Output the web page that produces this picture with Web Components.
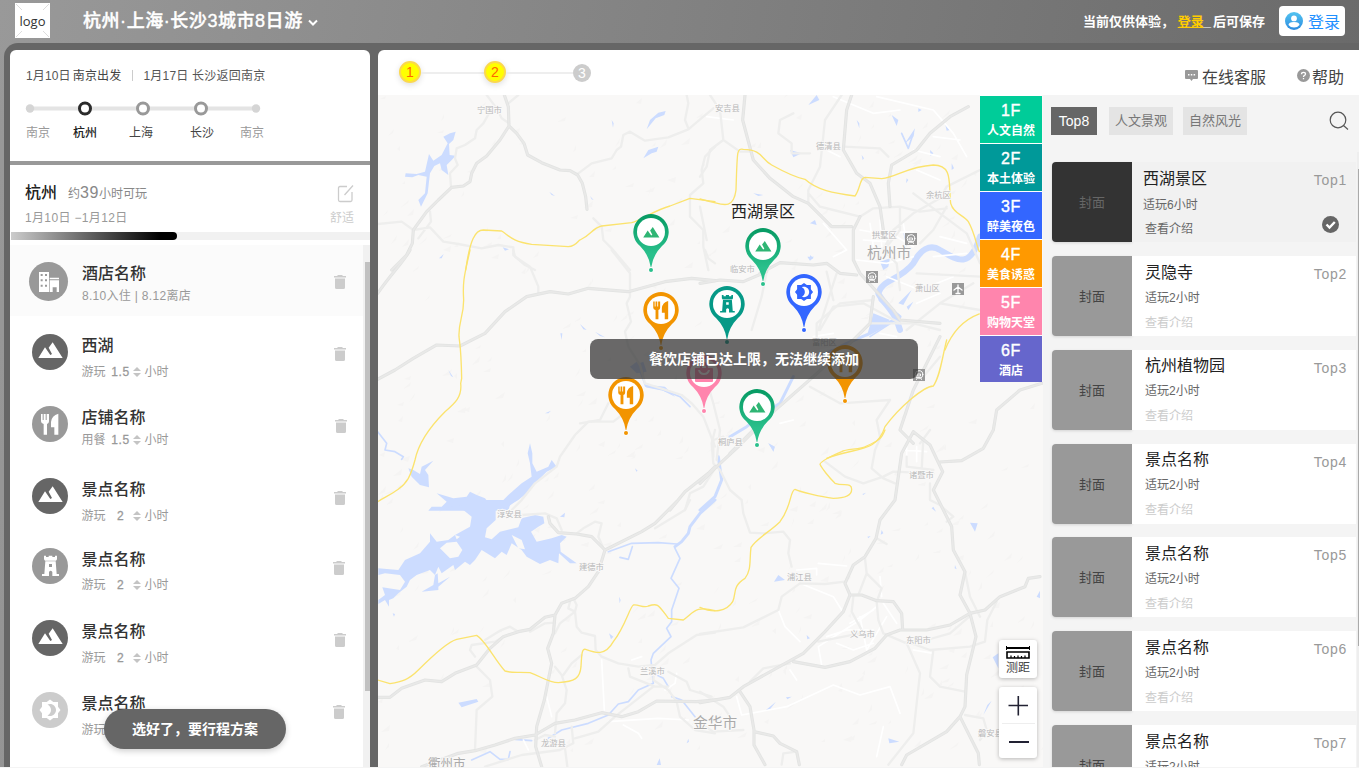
<!DOCTYPE html>
<html lang="zh-CN">
<head>
<meta charset="utf-8">
<title>行程规划</title>
<style>
html,body{margin:0;height:100%;overflow:hidden}
body{font-family:"Liberation Sans","Noto Sans CJK SC",sans-serif;color:#333;font-size:12px}
</style>
</head>
<body>
<trip-app></trip-app>
<script>
const glyphs = {
  mountain: ['96 282 108 108','<path d="M115 354L135 322L151 345L156 342L146 323L158 307L188 354Z"/>'],
  food: ['96 498 108 108','<path d="M123 522h5v18h3v-18h6v18h3v-18h5l2 0v22q0 6-6 8v32h-10v-32q-8-2-8-8zM175 521v63h-12v-22h-10v-16q2-20 22-25z"/>'],
  tower: ['96 144 108 108','<path fill-rule="evenodd" d="M132 167h6v4h8v-4h11v4h8v-4h6v11l-3 4h-33l-3-4zM136 184h31l3 38h7v6h-20v-12q-5-7-10 0v12h-21v-6h7zM147 192v9h9v-9z"/>'],
  hotel: ['87 66 117 117','<path fill-rule="evenodd" d="M117 96h30v60h-30zM122 102v6h6v-6zM135 102v6h6v-6zM122 118v6h6v-6zM135 118v6h6v-6zM122 134v6h6v-6zM135 134v6h6v-6zM149 113h28v5h-28zM149 121h28v35h-7v-14h-12v14h-9z"/>'],
  night: ['-6 -6 36 36','<path d="M20 8.69V4h-4.69L12 1.5 8.69 4H4v4.69L1.5 12 4 15.31V20h4.69L12 22.5 15.31 20H20v-4.69L22.5 12 20 8.69zM12 18c-.89 0-1.74-.2-2.5-.55C11.56 16.5 13 14.42 13 12s-1.44-4.5-3.5-5.45C10.26 6.2 11.11 6 12 6c3.31 0 6 2.69 6 6s-2.69 6-6 6z"/>'],
  bag: ['0 0 36 36','<path fill-rule="evenodd" d="M10 13h4q0-6 4-6t4 6h4q1 0 1 1v12q0 1-1 1H10q-1 0-1-1V14q0-1 1-1zM16 13h4q0-3-2-3t-2 3zM12 15q1 5 6 5t6-5h-2q-1 3-4 3t-4-3z"/>']
};
const glyph = (name, size) => `<svg width="${size}" height="${size}" viewBox="${glyphs[name][0]}" fill="currentColor">${glyphs[name][1]}</svg>`;

function define(name, css, html) {
  customElements.define(name, class extends HTMLElement {
    connectedCallback() {
      if (this.shadowRoot) return;
      const t = document.createElement('template');
      t.innerHTML = `<style>:host{display:block;box-sizing:border-box}*{box-sizing:border-box}svg{display:block}${css}</style>` +
        (typeof html === 'function' ? html(n => this.getAttribute(n) || '') : html);
      this.attachShadow({mode: 'open'}).append(t.content.cloneNode(true));
    }
  });
}

define('app-header', `
:host{display:flex;height:43px;color:#fff;align-items:flex-start}
.logo{margin:3px 0 0 15px;width:35px;height:35px;background:#fff;color:#333;display:grid;place-items:center;font:13px "Open Sans",sans-serif}
.logo svg,.logo span{grid-area:1/1}
h1{margin:8px 0 0 33px;font-size:18px;line-height:26px;font-weight:500;white-space:nowrap;letter-spacing:.55px;-webkit-text-stroke:.4px #fff}
.arrow{margin:19px 0 0 5px}
.hint{margin:12px 14px 0 auto;font-size:13px;font-weight:700;line-height:20px;white-space:nowrap}
.hint a{color:#fc0;text-decoration:underline}.hint u{text-decoration:none;letter-spacing:2px}
.login{margin:6px 14px 0 0;width:66px;height:30px;border-radius:4px;background:#fff;color:#1e90ff;font-size:16px;display:flex;align-items:center;gap:5px;padding-left:6px;white-space:nowrap}`,
`<div class="logo"><svg width="35" height="35" stroke="#ddd" fill="none"><path d="M1 1L7 7M34 1L28 7M1 34L7 28M34 34L28 28"/></svg><span>logo</span></div>
<h1>杭州·上海·长沙3城市8日游</h1>
<svg class="arrow" width="10" height="8" fill="none" stroke="#fff" stroke-width="2"><path d="M1 1.5L5 5.5L9 1.5"/></svg>
<div class="hint">当前仅供体验， <a>登录</a><u>_</u>后可保存</div>
<div class="login"><svg width="18" height="18"><defs><linearGradient id="g" x2="0" y2="1"><stop stop-color="#54c4f0"/><stop offset="1" stop-color="#2c8be0"/></linearGradient></defs><circle cx="9" cy="9" r="9" fill="url(#g)"/><circle cx="9" cy="6.4" r="2.9" fill="#fff"/><path d="M3.5 13q0-3 5.5-3t5.500 3Q12.500 15.500 9 15.500T3.500 13z" fill="#fff"/></svg><span>登录</span></div>`);

define('trip-route', `
:host{height:111px;padding:17px 0 0 16px;white-space:nowrap}
.dates{display:flex;line-height:18px;color:#555;letter-spacing:.15px}.dates i{width:1px;height:11px;background:#ccc;margin:3px 10px 0 11px}
.dates b{font-weight:400;margin-left:2px;color:#444}.dates em{font-style:normal;letter-spacing:.22px}
svg{margin:15.500px 0 0 -1px}
.names{display:flex;margin-top:8.500px;line-height:18px;color:#999}.names b{font-weight:400;color:#444}`,
`<div class="dates"><span>1月10日</span><b>南京出发</b><i></i><em>1月17日 长沙返回南京</em></div>
<svg width="236" height="15" fill="#fff"><path d="M5 7.500H231" stroke="#e4e4e4" stroke-width="4"/><circle cx="5" cy="7.500" r="4.200" fill="#d5d5d5"/><circle cx="231" cy="7.500" r="4.200" fill="#d5d5d5"/><circle cx="60" cy="7.500" r="5.500" stroke="#2b2b2b" stroke-width="3"/><circle cx="118" cy="7.500" r="5.500" stroke="#999" stroke-width="3"/><circle cx="176" cy="7.500" r="5.500" stroke="#999" stroke-width="3"/></svg>
<div class="names"><span>南京</span><b style="margin-left:23px;color:#222;font-weight:500">杭州</b><b style="margin-left:32px">上海</b><b style="margin-left:37px">长沙</b><span style="margin-left:26px">南京</span></div>`);

define('city-summary', `
:host{height:84px;border-top:4px solid #999;white-space:nowrap}
.row{display:flex;justify-content:space-between;padding:15px 16px 0 15px;height:67px;color:#999}
h2{margin:0;font-size:12px;line-height:26px;font-weight:400;color:#888}h2 b{font-size:16px;font-weight:500;color:#222;margin-right:11px}h2 big{font-size:16px;letter-spacing:.6px}
.d{line-height:18px;margin-top:2px;letter-spacing:.35px}
.e{display:flex;flex-direction:column;align-items:flex-end;color:#ccc}.e svg{margin-top:4px}.e span{line-height:18px;margin-top:5px}
.bar{height:8px;background:#f1f1f1;margin-left:1px}.bar i{display:block;width:166px;height:8px;border-radius:0 4px 4px 0;background:linear-gradient(90deg,#ccc,#000 90%)}`,
`<div class="row"><div><h2><b>杭州</b>约<big>39</big>小时可玩</h2><div class="d">1月10日 −1月12日</div></div>
<div class="e"><svg width="17" height="20" fill="none" stroke="#ccc" stroke-width="1.300"><path d="M10 2.500H3Q1.500 2.500 1.500 4V16Q1.500 17.500 3 17.500H13.500Q15 17.500 15 16V8M7.500 11L16 1.500"/></svg><span>舒适</span></div></div><div class="bar"><i></i></div>`);

define('plan-item', `
:host{display:flex;height:72px;white-space:nowrap}
.ic{flex:none;width:36px;height:36px;border-radius:50%;margin:18px 13.500px 0 22px;color:#fff}
:host([icon=hotel]){background:#fbfbfb;height:71px}:host([icon=hotel]) .ic{width:39px;height:39px;margin:17px 14px 0 19px}
h3{margin:18px 0 0;font-size:16px;font-weight:500;line-height:24px;color:#333}:host([icon=hotel]) h3{margin-top:17px}
p{margin:0;line-height:16px;color:#999;display:flex}
.n{width:31px;text-align:center;letter-spacing:.6px;padding-right:1px;-webkit-text-stroke:.3px #999}
.note{letter-spacing:.3px}
.t{margin-top:30px;margin-left:auto;color:#ccc}:host([icon=hotel]) .t{margin-top:29px}`,
a => `<div class="ic" style="background:${a('color')}">${glyph(a('icon'), a('icon')==='hotel'?39:36)}</div>
<div><h3><slot></slot></h3><p style="margin-top:${a('gap')}px">${a('note') ? `<span class="note">${a('note')}</span>` : `<span>${a('verb')}</span><span class="n">${a('hours')}</span><svg width="8" height="12" fill="#c4c4c4" style="margin:2px 4px 0 -4px"><path d="M0 5L4 1L8 5ZM0 7H8L4 11Z"/></svg><span>小时</span>`}</p></div>
<svg class="t" width="12" height="16" fill="currentColor" style="margin-right:${a('tr')||17.5}px"><path d="M4 1h4l1 1h3v1.500H0V2h3zM1 4.500h10v9Q11 15 9.500 15h-7Q1 15 1 13.500z"/></svg>`);

define('trip-panel', `
:host{display:flex;flex-direction:column;width:360px;height:717px;background:#fff;border-radius:6px 6px 0 0;overflow:hidden;position:relative}
.list{display:flex;flex:1;min-height:0}
.items{width:353px;overflow:hidden}
.sb{width:7px;background:#f1f1f1;padding:17px 0 0 2px}.sb i{display:block;height:429px;background:#c1c1c1}
.go{position:absolute;left:94px;top:659px;width:182px;height:40px;border-radius:20px;background:#666;color:#fff;font-size:14px;font-weight:700;line-height:40px;text-align:center;box-shadow:0 2px 6px #0003}`,
`<trip-route></trip-route><city-summary></city-summary>
<div class="list"><div class="items">
<plan-item icon="hotel" color="#999" gap="2" note="8.10入住 | 8.12离店">酒店名称</plan-item>
<plan-item icon="mountain" color="#666" gap="6" verb="游玩" hours="1.5">西湖</plan-item>
<plan-item icon="food" color="#999" gap="2" verb="用餐" hours="1.5" tr="16.5">店铺名称</plan-item>
<plan-item icon="mountain" color="#666" gap="6" verb="游玩" hours="2" style="height:70px">景点名称</plan-item>
<plan-item icon="tower" color="#999" gap="5" verb="游玩" hours="2" tr="18.5">景点名称</plan-item>
<plan-item icon="mountain" color="#666" gap="6" verb="游玩" hours="2">景点名称</plan-item>
<plan-item icon="night" color="#ccc" gap="6" verb="游玩" hours="2" tr="18.5">景点名称</plan-item>
</div><div class="sb"><i></i></div></div><div class="go">选好了，要行程方案</div>`);

define('step-bar', `
:host{display:flex;height:45px;background:#fff;border-radius:6px 0 0 0;white-space:nowrap;color:#444;font-size:16px}
.s{display:flex;align-items:center;height:45px;padding-left:21px;font-size:14px}
b{font-weight:400;width:22px;height:22px;border-radius:50%;background:#ff0;border:2px solid #fbd84d;color:#f60;display:grid;place-items:center;box-shadow:0 2px 6px #0002;margin-top:-1px}
b.off{width:18px;height:18px;background:#ccc;border:0;color:#fff;box-shadow:none;margin-top:1px}
i{height:2px;background:#eee;width:63px}i+b+i{width:67px}
.l{display:flex;align-items:center;margin-left:auto;padding-top:6px;gap:4px}.h{display:flex;align-items:center;padding-top:6px;margin:0 15px 0 31px;gap:2px}`,
`<div class="s"><b>1</b><i></i><b>2</b><i></i><b class="off">3</b></div>
<div class="l"><svg width="13" height="13" fill="#999"><path d="M1 1h11q1 0 1 1v7q0 1-1 1H8L6.500 12 5 10H1Q0 10 0 9V2Q0 1 1 1z"/><path d="M3 5h1.500v1.500H3zM5.800 5h1.500v1.500H5.800zM8.600 5h1.500v1.500H8.600z" fill="#fff"/></svg><span>在线客服</span></div>
<div class="h"><svg width="13" height="13"><circle cx="6.500" cy="6.500" r="6.500" fill="#999"/><path d="M4.500 5.200Q4.500 3.300 6.500 3.300T8.500 5Q8.500 6 7.300 6.500Q6.500 7 6.500 8M6.500 9v1.300" fill="none" stroke="#fff" stroke-width="1.300"/></svg><span>帮助</span></div>`);

/* Each group below is one map sheet, drawn at three units per pixel. */
const sheets = [
 {x:375,y:40, major:'M388 165L400 200L402 258L425 280L447 310L458 345L500 368L555 390L585 392L608 405L622 430L632 470L636 508M402 258L375 300L335 348L305 370L290 400L285 425L265 438L230 442L190 480L155 515L115 570L112 610L95 645L50 690',
  minor:'M335 165L365 205L380 235L402 250M430 165L400 190M345 215L325 250L305 270L300 295L270 315L245 325L240 355L248 375L225 400L228 440M8 552L80 545L115 570L165 562L205 605L250 612L320 625L370 615L415 622L415 645L450 675L480 690M165 515L168 545L130 595M610 400L650 370L710 355L725 330L738 320L745 285L765 275L810 302L880 292L940 268L985 230L1015 205M935 165L940 190L930 240L940 265M1020 320L990 350L980 390L985 430L945 465L945 530L985 570L985 620L1000 690M655 535L680 560L685 600L710 625L765 690',
  water:'M225 280L242 275L235 300L222 312L224 345L242 347L228 362L215 375L220 405L200 390L195 370L178 378L165 400L158 460L138 500L130 480L150 460L155 410L130 405L112 412L90 410L92 400L125 402L150 395L162 342L175 362L200 345L218 310L205 290ZM815 268L825 240L850 218L872 213L868 225L842 235ZM805 355L820 330L850 320L845 335L830 340ZM523 455L540 468L530 465ZM383 622L402 628L390 632ZM710 240L716 250L714 263ZM645 468L656 480L650 478ZM192 655L206 642L200 655Z',
  yellow:'M272 690C285 600 300 570 325 570L380 573C400 585 410 605 470 613L580 620C605 618 610 600 615 600C650 585 650 565 680 558L770 548C800 540 840 510 885 498L945 475L1020 485'},
 {x:375,y:250, major:'M105 0C90 30 50 70 8 130M8 388L60 360L115 325L185 285L255 288L330 250L390 185L455 140L525 125L580 132L640 115L760 125L870 95L950 85L1020 92M885 780L930 725L1000 670L1020 650',
  minor:'M415 0L420 20L465 50L490 110L490 130M710 0L765 70L765 140L755 160L768 215L750 245L760 290L795 345L810 400L920 435L950 460L985 500L1020 590M990 0L1000 25L1020 40M800 420L760 480L715 515L640 515L600 555L555 620L545 650L480 700L440 750L410 780M930 780L945 730L985 710L1020 655',
  water:'M100 655L115 660L135 672L140 650L175 632L150 660L160 675L162 712L135 705L110 680ZM185 730L235 745L275 740L285 725L305 735L330 745L350 770L380 755L400 735L440 700L470 680L465 640L458 610L465 580L472 610L472 640L485 665L520 650L530 630L545 650L515 665L480 700L460 725L430 750L405 765L400 782L160 782L170 770L200 770L215 755ZM765 350L785 335L805 355L808 400L820 405L870 410L900 440L860 420L810 410L795 370ZM615 222L635 240L625 238ZM660 245L690 262L675 258ZM510 490L528 482L520 490ZM780 655L788 662L784 665ZM220 360L235 382L228 378ZM556 250L562 250L560 270Z',
  river:'M8 545L35 580L30 600L60 605L85 620L80 628',
  yellow:'M285 0C270 70 262 90 266 150C266 200 250 215 252 260C255 290 258 290 260 385L257 400C262 440 240 460 210 485C165 530 130 580 120 630C112 660 108 670 100 685C80 720 40 735 8 755'},
 {x:375,y:500, water:'M280 0L425 0L400 20L362 30L362 60L335 85L330 112L350 118L375 95L430 82L440 55L480 45L505 50L508 70L490 80L468 95L485 125L530 115L560 105L575 110L555 130L557 155L605 190L585 190L552 160L550 190L525 180L495 192L455 170L440 150L410 130L395 165L380 155L360 175L320 150L300 180L285 195L270 185L240 210L235 195L200 220L190 200L180 225L165 210L125 225L105 240L95 260L70 280L55 295L42 300L42 320L30 300L10 312L10 300L30 285L22 262L75 270L90 245L75 225L30 220L10 225L10 205L70 210L90 180L135 160L165 125L165 100L185 125L220 120L240 105L285 80L290 50L265 30L230 30L165 28L235 20L275 15ZM140 275L175 255L180 225L188 220L190 250L225 230L190 260L190 270ZM250 608L305 597L310 605L260 622ZM555 50L570 38L568 52ZM845 795L854 775L858 795ZM935 730L940 716L942 725ZM732 290L737 300L734 310ZM702 400L715 410L708 418ZM53 340L60 342L57 350Z',
  land:'M195 145L215 128L245 125L262 150L250 170L225 175ZM410 105L440 120L450 148L430 145ZM240 105L255 110L245 118Z',
  wide:'M1020 0L975 40L945 80L940 100L920 125L900 140', river:'M700 155L770 130L850 128L905 132M735 172L760 178L772 140M900 145L915 175L888 235L912 265L890 330L890 365L875 385L888 410L835 460L828 480L835 550L790 570L760 605L730 612L700 645L640 670L560 690L520 715M420 718L470 722M290 780L345 755L375 778L400 778L405 755M835 520L865 535L880 560M890 590L920 600L960 650',
  major:'M8 592L45 592L80 565L150 540L200 545L240 520L305 495L345 445L385 410L430 395L465 388L510 352L540 345L560 310L600 295L640 260L670 215L690 150L800 95L840 70L905 5M690 150L650 110L605 102L550 98L525 70L520 50M540 345L535 400L518 445L530 490L520 540L508 600L485 680L482 740L500 800M140 800L250 760L300 752L360 735L420 715L480 705L540 670L600 660L680 638L740 650L790 635L845 603L965 605L1020 600',
  minor:'M690 155L670 110L680 70L660 65L625 85L605 100M440 45L510 40L545 55L560 90M595 295L605 315L600 335L605 380L620 398L660 408L662 450L680 470L730 490L790 500L840 495L880 460L965 405L1020 398M600 335L580 325L585 305M600 335L555 370L540 400M465 395L510 370L540 368M540 500L560 525L575 570L570 610L545 640L540 700M620 465L590 490L565 525M305 500L345 540L352 590L305 630L300 750M385 410L360 425L290 435L285 450L300 470M430 395L405 380L375 392L330 420M840 495L835 540L880 570L905 605L915 650L960 690L1020 700M760 505L765 530L840 560L880 560M880 515L935 545L945 570L1010 590M590 680L595 730L555 750L440 765L330 800M600 715L670 695L720 650L835 560M570 745L577 800M945 0L930 30L840 85M480 720L510 705L540 710',
  street:'M680 480L688 630M515 590L530 650M700 665L850 655L940 660M770 480L800 470M745 675L790 700L800 715M445 720L460 750M905 520L900 550L870 570',
  yellow:'M8 540L45 551C80 545 100 540 130 510C170 470 220 425 245 418L305 406C330 420 360 480 390 513C410 520 430 515 465 518C500 530 520 548 550 548C600 545 615 535 618 500C620 465 620 445 632 448C660 458 690 470 715 425C750 380 765 320 775 315C790 312 805 325 820 318C850 308 850 315 880 355L925 360C955 340 960 315 1020 332'},
 {x:700,y:430, major:'M1026 -140L960 -120L890 -60L880 0L850 55L785 92L720 96M640 5L605 70L585 210L540 270L528 325L495 380L460 405L435 460L450 495L430 545L375 605L310 670L130 770L90 802L0 818M640 5L690 45L728 125L700 180L755 290L760 360L795 425L780 495L810 550L828 620L800 735L795 830L780 860L740 905L620 975L605 1004M450 495L485 495L530 512L580 515L605 550L608 600M280 695L375 712L450 695L525 655L560 615L600 600L680 600L750 585L810 550L855 540L900 500L975 470L985 445L1020 440M120 785L150 830L162 900L162 945L195 1004M162 905L220 918L240 940L290 965L298 1004M780 860L835 970L838 1004M165 0L120 45L50 110L0 160',
  minor:'M45 0L35 40L40 100L60 120L90 180L125 210L130 250L150 308L190 310L250 305L270 330L265 370L275 410M300 460L245 500L235 540L130 592L0 612M300 460L375 462L435 455M375 95L435 140L490 160L550 140L580 125L700 130M540 25L525 60L515 115L550 145L585 160M495 385L500 430L545 475L530 515L535 570L550 610L620 640L660 730L640 910L565 1004M620 635L690 660L810 650L855 635L862 570L890 515M700 660L690 740L720 770L795 785M680 630L750 610L808 560M795 855L850 865L860 900L840 930M485 600L455 545L460 500M475 495L500 430M355 635L480 610M725 230L760 260L740 275M690 160L690 210L720 225M130 900L40 905L0 880M0 785L70 830L90 860M670 25L665 120M690 0L660 40M245 1004L250 970L290 965M150 755L190 715L270 700M530 325L560 342M795 425L810 500L840 560M620 80L620 110L700 120',
  street:'M235 540L255 590L300 635M300 460L400 500L425 540M110 800L125 855L260 830L400 765L480 795L570 770L600 850M365 705L355 650L480 570L530 530M380 620L440 600L520 600M410 640L460 660L520 640M540 440L545 500M550 520L590 580M450 580L520 540M355 400L440 408M290 420L350 415L350 435M480 560L500 660L560 560M610 60L680 65M620 50L620 95M650 50L650 95M640 660L700 670M550 890L530 980M270 720L290 750',
  wide:'M55 80L65 150L45 200L0 240', water:'M222 455L235 435L255 450ZM810 278L833 280L825 305ZM565 925L598 935L568 940ZM875 812L850 855L862 825ZM195 842L228 815L210 838ZM878 682L895 670L895 715ZM700 230L708 245L695 235ZM205 40L218 48L222 65ZM487 192L498 188L490 195ZM545 300L550 310L542 314ZM502 320L512 318L505 325ZM320 615L330 625L322 628ZM765 405L770 418L764 415ZM258 802L275 800L262 808ZM1010 500L1020 482L1020 505Z',
  yellow:'M555 0C545 25 540 30 500 48C480 60 440 55 425 65C400 75 360 95 360 103C365 115 390 145 405 160C430 170 455 155 455 178C455 200 430 205 400 205C360 200 300 185 285 178C270 180 275 230 240 275C210 305 170 325 153 352C148 390 155 420 135 445C95 470 110 490 98 515C80 545 40 550 0 532'},
 {x:700,y:90, major:'M135 15L128 90L160 210L210 265L280 320L325 340L395 410L455 410M455 15L440 60L430 180L470 250L510 280L540 350L550 420M805 50L750 80L690 130L650 180L575 225L565 280L570 350M480 380L460 420L460 510L480 550L580 660L600 690L720 700M180 550L240 518L340 525L380 520L420 550L470 555M0 580L60 570L130 575L200 545',
  minor:'M325 310L360 350L400 360L480 380L520 355L600 350L660 365L740 355M425 15L375 90L360 230L325 300L325 340M840 240L740 290L720 325L640 370L580 420L550 480L590 520L600 600M60 60L70 150L120 185L150 185M70 150L30 180L20 230L0 260M30 15L60 60M430 170L540 175L565 200M640 310L800 430L840 520M0 350L20 450M200 545L185 620L155 720M410 550L355 720M360 720L400 650L490 640L600 700M650 550L840 560M660 460L700 420L740 350M280 70L240 90L235 130L275 160L275 190L330 190M600 350L600 420L560 470M820 580L720 640L620 720M720 640L840 660',
  street:'M480 420L540 430L640 425M490 450L560 455M510 400L520 470M540 390L545 470M470 510L560 520L640 500M590 440L640 470M610 400L620 460M650 240L720 270M680 310L740 320M640 180L720 200M700 140L780 150M400 20L520 70L600 60M380 180L420 200M20 80L100 90M50 40L110 60M560 560L660 600L760 560M700 500L800 490M720 440L800 460M370 400L440 480L400 500M650 640L720 610M530 20L700 60L760 130L800 200',
  broad:'M840 440C810 540 770 510 720 480C690 460 660 480 640 520C600 570 545 570 535 610C550 640 570 650 590 690L600 720', river:'M590 690L520 710M605 130L625 175L640 130',
  water:'M325 45L350 15L358 30ZM270 180L305 190L280 202ZM575 75L595 90L590 108ZM615 160L645 115L640 140ZM540 515L570 505L565 530L550 540ZM322 500L342 500L330 512ZM330 400L345 390L350 405ZM610 430L622 430L620 470ZM595 640L635 600L610 645ZM655 55L665 60L655 66ZM735 100L750 120L740 122ZM690 180L700 190L692 198ZM160 310L190 315L175 318ZM755 220L762 235L755 240ZM470 90L478 100L478 115ZM280 595L300 590L285 602ZM485 195L492 205L488 210ZM620 265L625 270L618 280Z',
  yellow:'M0 327L30 335C60 340 100 365 108 300C112 180 110 175 130 178C190 180 180 205 215 225C260 250 300 265 315 268C350 300 400 310 465 318C480 300 480 262 495 262L545 266C590 262 620 230 700 225C760 225 745 280 752 340C760 370 790 375 805 395C825 430 830 470 838 485M735 780C755 730 790 690 838 672'},
 {x:580,y:190, major:'M880 320L870 400L800 470L700 560L620 630L540 700L450 790M1080 440L1000 600L960 720L1000 760',
  minor:'M870 400L1000 400L1080 420M0 700L60 690L85 640M690 590L780 640L930 630M1080 500L1030 560M710 460L710 400L780 340L880 330M380 570L400 640L420 720L410 810M740 245L760 330M930 630L890 690L900 740M400 800L400 750L430 740',
  wide:'M900 330L960 380L870 430L800 460L720 500M640 560L600 640L560 665L500 710L450 740', river:'M955 385L870 440M200 590L250 600L300 620L330 650',
  water:'M150 530L190 515L200 545L170 550ZM880 370L930 390L860 440ZM980 350L1000 335L985 360ZM565 760L585 770L580 785ZM690 195L700 205L690 210ZM0 405L15 415L8 410Z',
  street:'M600 700L640 690M700 440L760 430M720 480L780 470M900 430L950 440',
  yellow:'M740 805C830 770 890 790 915 710C960 650 1030 590 1060 588C1080 560 1085 510 1100 450'}
];
const labels = [[477,113,'宁国市'],[715,111,'安吉县'],[816,149,'德清县'],[926,198,'余杭区'],[872,238,'拱墅区'],[915,291,'萧山区'],[730,272,'临安市'],[812,345,'富阳区'],[718,445,'桐庐县'],[497,517,'淳安县'],[579,570,'建德市'],[787,580,'浦江县'],[909,478,'诸暨市'],[850,637,'义乌市'],[906,643,'东阳市'],[640,674,'兰溪市'],[541,746,'龙游县'],[978,736,'磐安县']];
const big = [[867,258,'杭州市'],[693,728,'金华市'],[428,768,'衢州市']];
let seed = 7; const rnd = () => (seed = (seed * 16807) % 2147483647) / 2147483647;
let relief = '';
for (let i = 0; i < 420; i++) { const x = 378 + rnd()*664, y = 95 + rnd()*660, w = 3 + rnd()*8; relief += `M${x|0} ${y|0}l${w|0} ${-(3+rnd()*7)|0}l${-w*.2|0} ${(3+rnd()*4)|0}z`; }
const layer = (k, attr) => sheets.map(s => s[k] ? `<path transform="translate(${s.x} ${s.y}) scale(.33333)" d="${s[k]}" ${attr}/>` : '').join('');

define('map-base', `:host{width:665px;height:672px;overflow:hidden}text{font-family:"Noto Sans CJK SC",sans-serif;paint-order:stroke;stroke:#faf9f8;stroke-width:2px}`,
 `<svg width="665" height="672" viewBox="378 95 665 672" fill="none" stroke-linejoin="round" stroke-linecap="round"><rect x="378" y="95" width="665" height="672" fill="#f9f8f7"/>
 <path d="${relief}" fill="#f5f4f3"/>
 ${layer('water','fill="#ccdcff"')}${layer('land','fill="#f9f8f7"')}${layer('broad','stroke="#ccdcff" stroke-width="18"')}${layer('wide','stroke="#ccdcff" stroke-width="9"')}${layer('river','stroke="#ccdcff" stroke-width="5"')}
 ${layer('street','stroke="#fff" stroke-width="5"')}${layer('minor','stroke="#eeeeed" stroke-width="7"')}${layer('major','stroke="#e2e3e2" stroke-width="9.500"')}${layer('major','stroke="#e9e9e8" stroke-width="5"')}
 ${layer('yellow','stroke="#fbe36e" stroke-width="4"')}
 ${labels.map(l=>`<text x="${l[0]}" y="${l[1]}" font-size="8.300" fill="#b8b8b8">${l[2]}</text>`).join('')}${big.map((l,i)=>`<text x="${l[0]}" y="${l[1]}" font-size="${i==2?12.500:14.700}" fill="#aaa">${l[2]}</text>`).join('')}
 ${[[911,239],[872,277],[919,375]].map(p=>`<g transform="translate(${p[0]} ${p[1]})"><rect x="-6" y="-6" width="12" height="12" fill="#999"/><circle r="3.800" cy="-.5" stroke="#fff"/><path d="M-2.500 4.500L-1.500 2.500H1.500L2.500 4.500M-1.500 -1h3v2h-3z" stroke="#fff" stroke-width=".9"/></g>`).join('')}
 <rect x="952" y="283" width="12" height="12" fill="#999"/><path d="M958 285v8M954 290l4-3 4 3M956 293.500h4" stroke="#fff" stroke-width="1.300"/></svg>`);

define('map-pin', `:host{position:absolute;width:36px;height:60px}.g{position:absolute;left:0;top:0}`,
 a => { const c=a('color'), f=a('top')||c, k=a('icon'), s=k==='mountain'?24:k==='bag'?36:31, o=(36-s)/2;
 return `<svg width="36" height="60"><defs><linearGradient id="p" x2="0" y2="1"><stop stop-color="${f}"/><stop offset=".75" stop-color="${c}"/></linearGradient></defs><path d="M18 0A18 18 0 0 1 29 32Q20 41 18.300 53H17.700Q16 41 7 32A18 18 0 0 1 18 0Z" fill="url(#p)"/><circle cx="18" cy="18" r="14" fill="#fff"/><circle cx="18" cy="56" r="2.700" fill="#fff" opacity=".8"/><circle cx="18" cy="56" r="2" fill="${c}"/></svg><div class="g" style="color:${k==='mountain'?'#2fb574':c};transform:translate(${o}px,${k==='mountain'?o+1.500:o}px)">${glyph(k,s)}</div>`; });

define('floor-nav', `:host{width:62px;display:flex;flex-direction:column;gap:1px;background:#fff;padding-top:1px}
div{height:47px;text-align:center;color:#fff;white-space:nowrap;font-weight:700;line-height:20px;padding-top:5px}div:last-child{height:46px}div:first-child{border-right:4px solid #00513d;padding-left:4px}b{display:block;font-size:16px;line-height:20px;font-weight:400;-webkit-text-stroke:.4px #fff;letter-spacing:.6px}`,
 [['人文自然','#0c9'],['本土体验','#099'],['醉美夜色','#36f'],['美食诱惑','#f90'],['购物天堂','#ff85ad'],['酒店','#66c']].map((f,i)=>`<div style="background:${f[1]}"><b>${i+1}F</b>${f[0]}</div>`).join(''));

define('map-tools', `:host{width:38px}.b{background:#fff;border-radius:3px;box-shadow:0 1px 4px #0004;width:38px}.m{height:38px;display:flex;flex-direction:column;align-items:center;line-height:16px;padding-top:6px;gap:1px;color:#444;margin-bottom:9px}.z{height:71px}`,
 `<div class="b m"><svg width="24" height="13" stroke="#000" fill="none"><path d="M0 2H24" stroke-width="2"/><path d="M.5 0v4M23.500 0v4"/><path d="M1 12V6H23V12Z" stroke-width="1.600"/><path d="M5 12V9.500M8.500 12v-2M12 12V9.500M15.500 12v-2M19 12V9.500" stroke-width="1.200"/></svg><span>测距</span></div>
 <div class="b z"><svg width="38" height="71" stroke="#223" fill="none" stroke-width="1.600"><path d="M9.500 18.500H29M19.300 9v19.500"/><path d="M10 55H30" stroke-width="2"/><path d="M3 36.500H36" stroke="#eee" stroke-width="1"/></svg></div>`);

define('map-view', `:host{position:relative;width:665px;height:672px;overflow:hidden}
floor-nav{position:absolute;left:602px;top:0}map-tools{position:absolute;left:621px;top:545px}
.name{position:absolute;left:353px;top:106px;font-size:16px;line-height:22px;color:#222;white-space:nowrap}
.toast{position:absolute;left:212px;top:244px;width:328px;height:40px;border-radius:8px;background:rgba(48,48,48,.72);color:#fff;font-size:14px;font-weight:700;line-height:40px;text-align:center;white-space:nowrap}`,
 `<map-base></map-base>` + [[651,232,'mountain','#2ac08c','#069a63'],[763,246,'mountain','#2ac08c','#069a63'],[757,407,'mountain','#2ac08c','#069a63'],[661,310,'food','#f29400'],[626,395,'food','#f29400'],[845,363,'food','#f29400'],[727,304,'tower','#069987'],[804,292,'night','#36f'],[704,373,'bag','#ff85ad']].map(p=>`<map-pin style="left:${p[0]-396}px;top:${p[1]-113}px" icon="${p[2]}" color="${p[3]}" top="${p[4]||''}"></map-pin>`).join('') +
 `<div class="name">西湖景区</div><floor-nav></floor-nav><map-tools></map-tools><div class="toast">餐饮店铺已达上限，无法继续添加</div>`);

define('spot-card', `:host{display:flex;height:80px;margin-bottom:13.800px;width:304px;white-space:nowrap}
.c{width:80px;height:80px;flex:none;border-radius:4px 0 0 4px;background:#999;color:#444;font-size:13px;line-height:81px;text-align:center;box-shadow:0 1px 3px #0002}
.t{flex:1;background:#fff;padding:4.600px 0 0 13px}h3{margin:0;font-size:16px;line-height:24px;font-weight:400;color:#222}p{margin:5px 0 0;line-height:16px;color:#666}p.l{color:#ccc;margin-top:9px}
.r{background:#fff;width:60px;padding:8px 9px 0 0;display:flex;flex-direction:column;align-items:flex-end;font-size:14px;line-height:20px;color:#999;letter-spacing:.7px}
:host([active]) .c{background:#333;color:#666}:host([active]) .t,:host([active]) .r{background:#f1f1f1}:host([active]) .t{padding:5px 0 0 11px}:host([active]) p{margin-top:6px}:host([active]) p.l{color:#666;margin:8px 0 0 2px}.r svg{margin:26px 8px 0 0}`,
 a => `<div class="c">封面</div><div class="t"><h3><slot></slot></h3><p>适玩${a('hours')}小时</p><p class="l">查看介绍</p></div><div class="r"><span>Top${a('rank')}</span>${a('active')?'<svg width="17" height="17"><circle cx="8.500" cy="8.500" r="8.500" fill="#666"/><path d="M4.500 8.500L7.500 11.500L12.800 6" fill="none" stroke="#fff" stroke-width="2.400"/></svg>':''}</div>`);

define('spot-panel', `:host{flex:1;background:#f4f4f4;height:672px;overflow:hidden;position:relative}
.tabs{display:flex;margin:12px 0 27.200px 8px;height:28px;color:#777;font-size:13px;line-height:28px;white-space:nowrap}.tabs span{width:64px;background:#e4e4e4;text-align:center;margin-right:10px}.tabs span.on{width:46px;background:#666;color:#fff;margin-right:12px;font-size:14px}
.tabs svg{margin:4px 10px 0 auto}.cards{margin-left:9px}.sb{position:absolute;right:0;top:57px;width:2px;height:615px;background:#eee;padding:17px 0 0 1px}.sb i{display:block;height:477px;background:#aaa}`,
 `<div class="tabs"><span class="on">Top8</span><span>人文景观</span><span>自然风光</span><svg width="20" height="20" fill="none" stroke="#555" stroke-width="1.200"><circle cx="9" cy="9" r="7.800"/><path d="M14.500 14.500L19 18.500"/></svg></div>
 <div class="cards">${['西湖景区','灵隐寺','杭州植物园','景点名称','景点名称','景点名称','景点名称'].map((n,i)=>`<spot-card rank="${i+1}" hours="${i?2:6}" ${i?'':'active="1"'}>${n}</spot-card>`).join('')}</div><div class="sb"><i></i></div>`);

define('trip-app', `:host{width:1359px;height:768px;overflow:hidden;background:#f4f4f4}
.bg{height:767px;background:linear-gradient(100deg,#999,#666)}
main{margin-left:4px;height:724px;background:#666;border-radius:14px 0 0 0;padding:7px 0 0 6px;display:flex;gap:8px}
section{flex:1;min-width:0}.w{display:flex}`,
 `<div class="bg"><app-header></app-header><main><trip-panel></trip-panel><section><step-bar></step-bar><div class="w"><map-view></map-view><spot-panel></spot-panel></div></section></main></div>`);
</script>
</body>
</html>
